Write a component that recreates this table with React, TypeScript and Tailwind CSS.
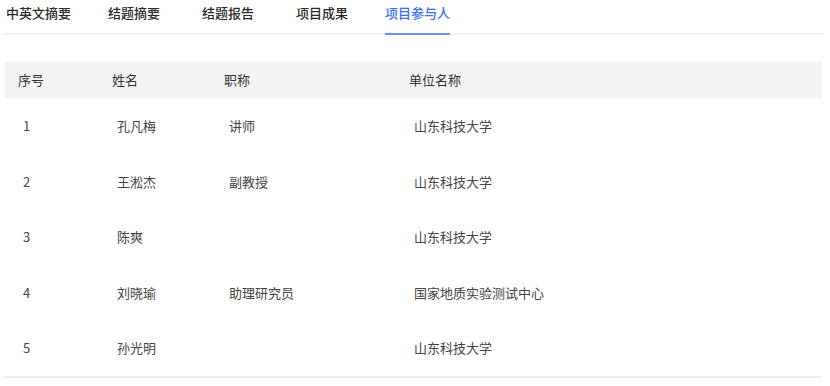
import React from "react";

const tabs = [
  { label: "中英文摘要", ml: "ml-0" },
  { label: "结题摘要", ml: "ml-[37px]" },
  { label: "结题报告", ml: "ml-[42px]" },
  { label: "项目成果", ml: "ml-[42px]" },
  { label: "项目参与人", ml: "ml-[37px]", active: true },
];

const rows = [
  ["1", "孔凡梅", "讲师", "山东科技大学"],
  ["2", "王淞杰", "副教授", "山东科技大学"],
  ["3", "陈爽", "", "山东科技大学"],
  ["4", "刘晓瑜", "助理研究员", "国家地质实验测试中心"],
  ["5", "孙光明", "", "山东科技大学"],
];

const cols = "grid grid-cols-[94px_112px_185px_1fr]";

const App = () => {
  return (
    <div
      className="w-[830px] h-[386px] bg-white pl-[4px] pr-[6px] text-[13px]"
      style={{ fontFamily: '"Noto Sans CJK SC", "Noto Sans", sans-serif' }}
    >
      <nav className="flex pl-[2px] border-b-2 border-[#f1f1f3] h-[35px]">
        {tabs.map((t) => (
          <div
            key={t.label}
            className={`${t.ml} pt-[4px] leading-[18px] font-medium h-[35px] -mb-[2px] border-b-2 ${
              t.active
                ? "text-[#3b6ef0] border-[#6d8ff5]"
                : "text-[#2b2b2b] border-transparent"
            }`}
          >
            {t.label}
          </div>
        ))}
      </nav>

      <div className="mt-[27px] w-[818px] pl-[1px]">
        <div className={`${cols} h-[36px] items-center bg-[#f3f3f3] text-[#333333]`}>
          <div className="pl-[13px]">序号</div>
          <div className="pl-[13px]">姓名</div>
          <div className="pl-[13px]">职称</div>
          <div className="pl-[13px]">单位名称</div>
        </div>
        <div className="border-b-2 border-[#ececec] -ml-[2px] pl-[2px]">
          {rows.map((r) => (
            <div
              key={r[0]}
              className={`${cols} h-[55.6px] items-center text-[#444444]`}
            >
              {r.map((c, i) => (
                <div key={i} className="pl-[18px]">
                  {c}
                </div>
              ))}
            </div>
          ))}
        </div>
      </div>
    </div>
  );
};

export default App;
